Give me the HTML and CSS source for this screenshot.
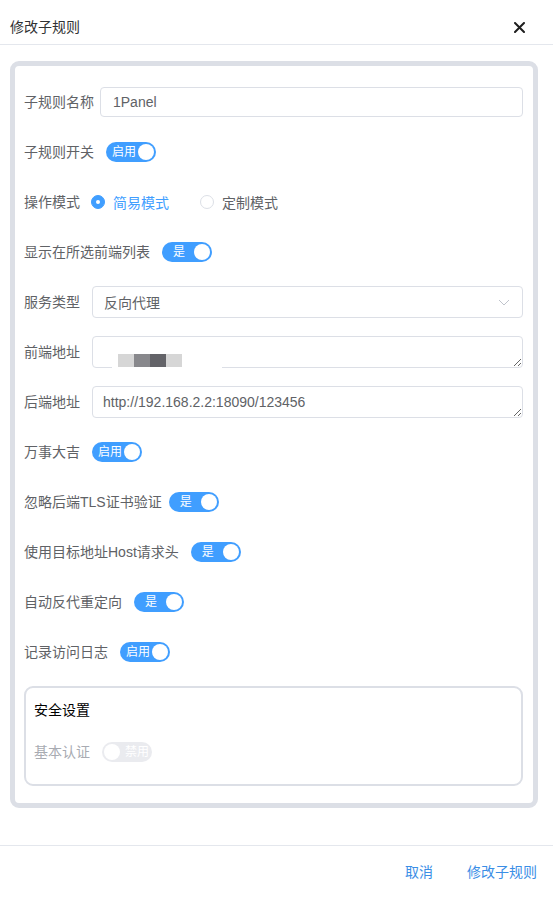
FILE: index.html
```html
<!DOCTYPE html>
<html lang="zh">
<head>
<meta charset="utf-8">
<title>修改子规则</title>
<link rel="stylesheet" href="styles.css">
</head>
<body>
<div class="dialog">
  <div class="header">
    <span class="title">修改子规则</span>
    <svg class="close" width="11" height="11" viewBox="0 0 11 11"><path d="M1 1L10 10M10 1L1 10" stroke="#1f1f1f" stroke-width="2" stroke-linecap="round"/></svg>
  </div>
  <div class="content">
    <div class="card">
      <div class="row gap-s">
        <label class="lbl">子规则名称</label>
        <div class="input"><span>1Panel</span></div>
      </div>
      <div class="row">
        <label class="lbl">子规则开关</label>
        <span class="switch"><span class="txt txt-wide">启用</span><span class="knob"></span></span>
      </div>
      <div class="row">
        <label class="lbl">操作模式</label>
        <span class="radio checked"><span class="dot"></span><span class="rtext">简易模式</span></span>
        <span class="radio"><span class="dot"></span><span class="rtext">定制模式</span></span>
      </div>
      <div class="row">
        <label class="lbl">显示在所选前端列表</label>
        <span class="switch"><span class="txt txt-one">是</span><span class="knob"></span></span>
      </div>
      <div class="row">
        <label class="lbl">服务类型</label>
        <div class="input select"><span>反向代理</span>
          <svg class="arrow" width="12" height="7" viewBox="0 0 12 7"><path d="M1 1L6 6L11 1" fill="none" stroke="#c0c4cc" stroke-width="1"/></svg>
        </div>
      </div>
      <div class="row">
        <label class="lbl">前端地址</label>
        <div class="tawrap">
          <textarea class="ta" rows="1"></textarea>
          <div class="mask"></div>
          <div class="mosaic"><span class="m1"></span><span class="m2"></span><span class="m3"></span><span class="m1"></span></div>
        </div>
      </div>
      <div class="row">
        <label class="lbl">后端地址</label>
        <div class="tawrap">
          <textarea class="ta" rows="1">http://192.168.2.2:18090/123456</textarea>
        </div>
      </div>
      <div class="row">
        <label class="lbl">万事大吉</label>
        <span class="switch"><span class="txt txt-wide">启用</span><span class="knob"></span></span>
      </div>
      <div class="row gap-t">
        <label class="lbl">忽略后端TLS证书验证</label>
        <span class="switch"><span class="txt txt-one">是</span><span class="knob"></span></span>
      </div>
      <div class="row">
        <label class="lbl">使用目标地址Host请求头</label>
        <span class="switch"><span class="txt txt-one">是</span><span class="knob"></span></span>
      </div>
      <div class="row">
        <label class="lbl">自动反代重定向</label>
        <span class="switch"><span class="txt txt-one">是</span><span class="knob"></span></span>
      </div>
      <div class="row">
        <label class="lbl">记录访问日志</label>
        <span class="switch"><span class="txt txt-wide">启用</span><span class="knob"></span></span>
      </div>
      <div class="sec">
        <div class="sec-title">安全设置</div>
        <div class="row last">
          <label class="lbl dim">基本认证</label>
          <span class="switch off"><span class="knob"></span><span class="txt txt-off">禁用</span></span>
        </div>
      </div>
    </div>
  </div>
  <div class="footer">
    <span class="btn">取消</span>
    <span class="btn">修改子规则</span>
  </div>
</div>
</body>
</html>
```

FILE: styles.css
```css
* { box-sizing: border-box; }
html, body { margin: 0; padding: 0; background: #fff; }
body {
  font-family: "Liberation Sans", "Noto Sans CJK SC", sans-serif;
  font-size: 14px;
  color: #606266;
}
.dialog { width: 553px; height: 897px; display: flex; flex-direction: column; }
.header {
  height: 45px;
  border-bottom: 1px solid #e4e7ed;
  display: flex;
  align-items: center;
  justify-content: space-between;
  padding: 10px 28px 0 10px;
}
.title { color: #303133; font-size: 14px; line-height: 20px; }
.close { display: block; }
.content { padding: 16px 15px 0 10px; }
.card {
  border: 5px solid #dcdfe6;
  border-radius: 9px;
  padding: 20px 10px 17px 9px;
}
.row {
  display: flex;
  align-items: center;
  height: 32px;
  margin-bottom: 18px;
  gap: 12px;
}
.row.gap-s { gap: 6px; }
.row.gap-t { gap: 7px; }
.row.last { margin-bottom: 0; }
.lbl { line-height: 32px; white-space: nowrap; color: #606266; }
.lbl.dim { color: #a8abb2; }
.input {
  flex: 1;
  height: 30px;
  border: 1px solid #dcdfe6;
  border-radius: 4px;
  display: flex;
  align-items: center;
  padding: 0 12px;
  color: #606266;
}
.select { height: 32px; padding-left: 11px; justify-content: space-between; padding-right: 12px; }
.arrow { display: block; }
.tawrap { flex: 1; position: relative; height: 32px; }
.ta {
  display: block;
  width: 100%;
  height: 32px;
  border: 1px solid #dcdfe6;
  border-radius: 4px;
  padding: 5px 10px;
  font-family: "Liberation Sans", "Noto Sans CJK SC", sans-serif;
  font-size: 14px;
  line-height: 20px;
  color: #606266;
  resize: vertical;
  outline: none;
  overflow: hidden;
}
.mask {
  position: absolute;
  left: 20px;
  width: 110px;
  top: 10px;
  height: 24px;
  background: #fff;
}
.mosaic {
  position: absolute;
  left: 26px;
  top: 18px;
  display: flex;
  height: 13px;
}
.mosaic span { width: 16px; height: 13px; display: block; }
.m1 { background: #d6d6d6; }
.m2 { background: #88888c; }
.m3 { background: #636368; }
.switch {
  position: relative;
  width: 50px;
  height: 20px;
  border-radius: 10px;
  background: #409eff;
  display: flex;
  align-items: center;
  padding: 0 2px;
  flex: none;
}
.switch .txt {
  flex: 1;
  color: #fff;
  font-size: 12px;
  line-height: 20px;
  white-space: nowrap;
}
.txt-wide { padding-left: 4px; }
.txt-one { text-align: center; padding-left: 0; }
.knob {
  width: 16px;
  height: 16px;
  border-radius: 50%;
  background: #fff;
  flex: none;
}
.switch.off { background: #eaebef; }
.txt-off { padding-left: 5px; }
.radio { display: flex; align-items: center; gap: 8px; margin-right: 19px; color: #606266; }
.radio .dot {
  width: 14px;
  height: 14px;
  border-radius: 50%;
  border: 1px solid #dcdfe6;
  background: #fff;
  display: flex;
  align-items: center;
  justify-content: center;
}
.radio.checked .dot { background: #409eff; border-color: #409eff; }
.radio.checked .dot::after {
  content: "";
  width: 4px;
  height: 4px;
  border-radius: 50%;
  background: #fff;
}
.radio.checked .rtext { color: #409eff; }
.row .radio:first-of-type { margin-left: -1px; }
.sec {
  border: 2px solid #dcdfe6;
  border-radius: 9px;
  padding: 11px 8px 16px 8px;
}
.sec-title { color: #000; line-height: 22px; margin-bottom: 15px; }
.footer {
  margin-top: auto;
  height: 52px;
  border-top: 1px solid #e4e7ed;
  display: flex;
  align-items: center;
  justify-content: flex-end;
  gap: 34px;
  padding: 0 16px 0 0;
}
.btn { color: #3a8ee6; line-height: 20px; }
```
